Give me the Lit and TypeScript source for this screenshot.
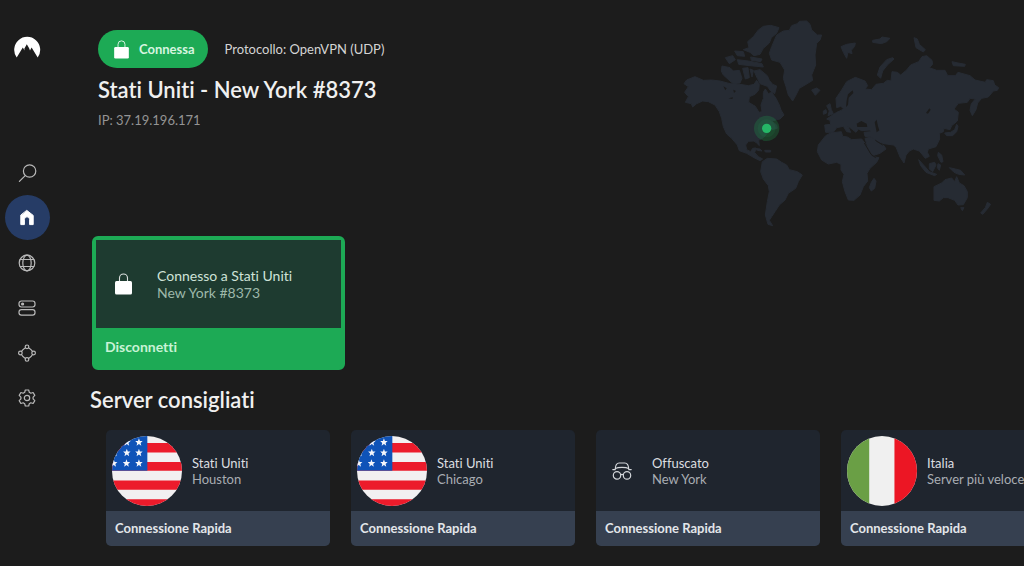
import { LitElement, html, svg, css } from "lit";
import { customElement, property } from "lit/decorators.js";

const star = "0,-12 3,-4 11,-4 5,2 7,10 0,5 -7,10 -5,2 -11,-4 -3,-4";
const starSpots = [
  [97, 66], [133, 66], [60, 97], [97, 97], [133, 97], [58, 128], [96, 128], [133, 128],
];

const flagUsa = html`<svg class="flag" viewBox="53 47 208 208" aria-hidden="true">
  <defs><clipPath id="round"><circle cx="157" cy="151" r="104" /></clipPath></defs>
  <g clip-path="url(#round)">
    <rect x="53" y="47" width="208" height="208" fill="#f2f0f1" />
    <path fill="#ec1b2b" d="M53 68h208v28H53zM53 124h208v26H53zM53 179h208v28H53zM53 235h208v28H53z" />
    <rect x="53" y="47" width="105" height="103" fill="#0f53b8" />
    ${starSpots.map(([x, y]) => svg`<polygon fill="#f4f6fb" points=${star} transform=${`translate(${x} ${y})`} />`)}
  </g>
</svg>`;

const flagItaly = html`<svg class="flag" viewBox="53 47 208 208" aria-hidden="true">
  <defs><clipPath id="round"><circle cx="157" cy="151" r="104" /></clipPath></defs>
  <g clip-path="url(#round)">
    <rect x="53" y="47" width="208" height="208" fill="#f0f0f0" />
    <rect x="53" y="47" width="66" height="208" fill="#6a9f45" />
    <rect x="194" y="47" width="68" height="208" fill="#ec1624" />
  </g>
</svg>`;

const spy = html`<svg class="glyph" viewBox="0 0 20 20" aria-hidden="true" fill="none" stroke="#d3d6da" stroke-width="1.2" stroke-linecap="round" stroke-linejoin="round">
  <path d="M.8 8.6h2.4M16.8 8.6h2.4M3.2 8.4C3.4 4 5 2 7.2 2h5.6c2.200 0 3.800 2 4 6.400M3.400 7.600C5 6.600 7.500 6.400 10 6.400s5 .2 6.600 1.200" />
  <circle cx="5" cy="14.400" r="3.700" /><circle cx="15" cy="14.400" r="3.700" />
  <path d="M8.600 13.800c.8-.6 2-.6 2.800 0" />
</svg>`;

const lock = html`<svg class="lock" viewBox="0 0 17 22" aria-hidden="true">
  <path d="M4.500 9V5a4 4 0 0 1 8 0v4" fill="none" stroke="currentColor" stroke-width="1.100" opacity=".85" />
  <rect x="0" y="8" width="17" height="13.500" rx="1.500" fill="currentColor" />
</svg>`;

const land = [
  "M20 195L45 185L70 196L95 195L120 198L150 206L180 208L205 212L222 208L230 196L238 208L236 225L225 238L208 245L206 262L226 274L237 292L246 290L243 270L250 250L250 232L256 222L265 236L275 232L288 250L298 270L303 285L312 300L300 312L275 318L290 330L292 340L270 345L262 355L250 368L236 376L238 392L230 384L222 378L205 379L197 390L200 404L212 410L218 400L228 399L224 413L235 425L248 432L240 437L222 428L200 415L178 407L172 390L155 370L140 357L130 335L125 310L118 290L105 270L85 260L68 258L50 266L38 276L34 266L16 262L25 245L14 232L25 215L12 206Z",
  "M275 95L290 60L310 48L328 46L335 32L352 26L358 19L380 18L390 28L395 45L412 60L425 60L420 75L410 85L405 120L407 150L395 180L398 196L375 210L358 220L348 240L338 258L325 240L318 215L310 190L314 165L300 142L275 135L268 115Z",
  "M203 80L220 65L235 45L250 34L272 31L297 38L290 55L274 68L268 84L250 100L240 118L222 122L210 112L190 104L207 98Z",
  "M222 168L240 164L262 182L268 196L278 208L290 213L284 236L272 228L262 214L240 206L232 190Z",
  "M126 153L150 158L160 168L178 166L186 190L180 204L160 206L150 198L130 180L124 168Z",
  "M136 128L158 122L166 134L148 146ZM164 108L190 110L194 124L172 122ZM172 134L205 138L246 146L250 156L210 152L176 148ZM188 160L204 158L208 188L196 192ZM210 162L220 166L216 186ZM212 126L246 132L242 140L214 136Z",
  "M206 228l18-6l8 8l-14 8z",
  "M222 400L240 402L246 408L232 406ZM254 406h18v5h-16z",
  "M247 440L262 430L290 432L305 442L320 450L328 464L352 470L367 480L355 500L347 520L325 535L315 555L298 570L285 590L275 605L268 616L278 632L264 628L256 600L262 560L268 530L265 512L250 492L242 470Z",
  "M437 362L452 354L484 350L488 364L502 366L515 374L545 372L555 385L565 405L578 425L597 428L590 442L570 460L561 475L563 498L550 515L540 540L522 556L505 555L495 530L487 500L492 478L483 465L483 448L470 442L445 447L425 435L412 410L415 390Z",
  "M555 370L575 366L590 380L612 392L618 402L600 415L578 422L565 402Z",
  "M434 330L452 328L450 316L440 312L470 292L484 286L490 280L482 274L470 278L468 250L485 225L500 200L526 187L555 198L563 212L555 222L575 224L588 208L610 205L622 196L633 198L636 170L652 172L662 180L680 165L692 150L716 140L726 125L740 122L756 136L758 148L748 158L770 166L795 166L803 182L826 182L834 172L870 182L885 195L916 202L920 194L940 197L944 210L956 218L952 226L940 228L925 246L905 250L893 264L888 284L877 302L870 286L874 266L886 252L870 250L862 262L835 265L822 282L835 292L832 318L815 332L810 344L792 340L790 350L778 355L779 372L768 395L745 402L742 412L748 424L736 430L718 408L700 402L688 408L678 420L672 444L660 426L648 396L640 390L612 386L590 378L575 366L555 364L552 352L572 350L570 345L545 347L535 342L528 352L518 344L503 332L512 352L500 350L490 334L470 338L460 352L437 352Z",
  "M440 272L450 266L454 284L460 296L444 302L448 288ZM430 288l8-4l2 10l-10 4zM395 225L410 219L420 226L406 241Z",
  "M483 95L500 88L526 84L524 94L514 106L516 116L504 112L500 130L490 112ZM578 76L600 72L606 66L630 70L620 80L604 86L578 82Z",
  "M702 68L712 72L718 88L736 104L730 111L708 98ZM638 128L642 132L622 150L608 168L602 190L592 180L600 156L620 134ZM816 140l18 4l22 4l-2 6l-34-2z",
  "M830 328L834 334L830 350L818 362L800 362L794 354L812 352L824 344ZM775 412l10 8l4 20l-6 2l-10-20z",
  "M716 434L736 456L748 470L770 478L764 482L738 472L722 452ZM748 446L764 442L768 450L758 470L748 462ZM774 446l8 4l-4 16l-6-8zM808 458L826 462L842 466L854 480L836 478L822 472Z",
  "M762 515L785 504L795 494L815 489L824 500L830 485L838 504L852 512L862 530L862 548L850 569L834 570L824 556L804 548L790 548L778 558L762 556ZM842 578l10 0l-5 9z",
  "M922 562l10 6l-10 14l-14 16l-6-4l14-16zM574 502L582 490L588 498L584 520L574 528L568 518Z",
].join("");

const water = "M498 276l6-6l2-22l14-14l-2-8l-14 12l-4 18zM530 326l14-8l16 8l2 10l-30 0zM584 322l6-8l4 20l4 12l-8 6zM738 294l10-14l4 4l-8 12zM130 214l10 6l-4 6zM145 250l14-3l-2 5zM160 224l8 4l-6 6z";

const worldMap = html`<svg class="map" viewBox="0 0 990 645" role="img" aria-label="Mappa del mondo">
  <path d=${land} fill="#262b33" stroke="#262b33" stroke-width="3" stroke-linejoin="round" />
  <path d=${water} fill="#1c1c1c" />
  <path d="M553 384l20 34l14 10M586 376l22 14" fill="none" stroke="#1c1c1c" stroke-width="3" />
  <circle cx="260" cy="340" r="38" fill="#1daa55" opacity=".24" />
  <circle cx="260" cy="340" r="27" fill="#1daa55" opacity=".1" />
  <circle cx="260" cy="340" r="14" fill="#25b666" />
</svg>`;

const navIcons = [
  { label: "Cerca", art: svg`<circle cx="11.600" cy="7" r="6.200" /><path d="M7.200 11.600L1.400 17.400" />` },
  { label: "Home", art: svg`<path d="M9 1.600L15.200 6.400V15.600H11.600V10.400a2.600 2.600 0 0 0-5.200 0V15.600H2.800V6.400Z" fill="#fff" stroke="#fff" stroke-width="1" stroke-linejoin="round" />` },
  { label: "Paesi", art: svg`<circle cx="9" cy="9" r="7.800" /><ellipse cx="9" cy="9" rx="4.200" ry="7.800" /><path d="M2.200 5.500h13.600M2.200 12.500h13.600" />` },
  { label: "Server", art: svg`<rect x="1" y="2" width="16" height="6" rx="2.400" /><rect x="1" y="10.600" width="16" height="5.600" rx="2.400" /><circle cx="4.600" cy="5" r="1" fill="currentColor" />` },
  { label: "Meshnet", art: svg`<circle cx="9" cy="2.800" r="1.800" /><circle cx="9" cy="15.400" r="1.800" /><circle cx="2.400" cy="9" r="1.800" /><circle cx="15.600" cy="9" r="1.800" /><path d="M7.400 3.700C5.600 4.800 4.400 5.800 3.400 7.500M10.600 3.700c1.800 1.100 3 2.100 4 3.800M3.400 10.500c1 1.800 2.200 3 4 4M14.600 10.500c-1 1.800-2.200 3-4 4" />` },
  { label: "Impostazioni", art: svg`<circle cx="9" cy="9" r="2.700" /><path d="M7.300 1h3.400l.6 2.300 1.500.9 2.300-.7 1.700 2.900-1.700 1.700v1.800l1.700 1.700-1.700 2.900-2.300-.7-1.500.9-.6 2.300H7.300l-.6-2.300-1.500-.9-2.300.7-1.700-2.900 1.700-1.700V8.100L1.200 6.400l1.700-2.900 2.300.7 1.500-.9z" stroke-linejoin="round" />` },
];

@customElement("side-nav")
class SideNav extends LitElement {
  static styles = css`
    :host { display: block; }
    .rail { display: flex; flex-direction: column; align-items: center; padding: 36px 0 0 4px; }
    .logo { width: 28px; height: 22px; margin-bottom: 92px; }
    .list { list-style: none; margin: 0; padding: 0; }
    .item { display: flex; width: 45px; height: 45px; align-items: center; justify-content: center; border-radius: 50%; color: #b9b9b9; }
    .current { background: #263c66; }
    .icon { width: 18px; height: 18px; overflow: visible; }
  `;
  render() {
    return html`<nav class="rail" aria-label="Menu">
      <svg class="logo" viewBox="0 0 28 22" aria-hidden="true">
        <path fill="#fff" d="M3.700 21.500A13 13 0 1 1 24.700 21.500L18.600 11.600L17 14.500L16 12L13.800 8.200L11.300 12.800L11.600 14.600L9.800 11.600Z" />
      </svg>
      <ul class="list">
        ${navIcons.map((n, i) => html`<li>
          <a class=${i === 1 ? "item current" : "item"} href="#" aria-label=${n.label}>
            <svg class="icon" viewBox="0 0 18 18" fill="none" stroke="currentColor" stroke-width="1.200" stroke-linecap="round">${n.art}</svg>
          </a>
        </li>`)}
      </ul>
    </nav>`;
  }
}

@customElement("server-card")
class ServerCard extends LitElement {
  @property() name = "";
  @property() place = "";
  @property() kind = "";
  static styles = css`
    :host { display: block; flex: none; }
    .card { display: block; width: 224px; padding: 0; border: 0; border-radius: 5px; overflow: hidden; background: #1f252e; font: 13px/16px Lato, sans-serif; font-variant-ligatures: none; text-align: left; }
    .top { display: flex; align-items: center; gap: 10px; height: 81px; padding-left: 6px; }
    .plain { gap: 20px; padding-left: 16px; }
    .flag { width: 70px; height: 70px; flex: none; }
    .glyph { width: 20px; height: 20px; flex: none; }
    .text { display: flex; flex-direction: column; white-space: nowrap; }
    .name { color: #dcdee0; }
    .place { color: #a9adb3; }
    .action { display: block; padding: 9px 9px 10px; background: #364050; color: #e3e6ea; font-weight: 700; }
  `;
  render() {
    const art = this.kind === "us" ? flagUsa : this.kind === "it" ? flagItaly : spy;
    return html`<button class="card" type="button">
      <span class=${this.kind === "spy" ? "top plain" : "top"}>
        ${art}
        <span class="text"><span class="name">${this.name}</span><span class="place">${this.place}</span></span>
      </span>
      <span class="action">Connessione Rapida</span>
    </button>`;
  }
}

const servers = [
  { name: "Stati Uniti", place: "Houston", kind: "us" },
  { name: "Stati Uniti", place: "Chicago", kind: "us" },
  { name: "Offuscato", place: "New York", kind: "spy" },
  { name: "Italia", place: "Server più veloce", kind: "it" },
];

@customElement("app-root")
class AppRoot extends LitElement {
  static styles = css`
    :host { display: grid; grid-template-columns: 50px minmax(0, 1fr); min-height: 100vh; background: #1c1c1c; color: #f0f0f0; font: 13px/16px Lato, sans-serif; font-variant-ligatures: none; }
    .main { min-width: 0; overflow: hidden; padding-left: 40px; }
    .hero { display: flex; justify-content: space-between; padding: 15px 14px 6px 8px; }
    .info { padding-top: 15px; }
    .status { display: flex; align-items: center; gap: 17px; color: #d4d4d4; }
    .pill { display: flex; align-items: center; gap: 10px; height: 38px; padding: 0 13px 0 16px; border-radius: 19px; background: #1daa55; color: #d8f5e0; font-weight: 700; }
    .lock { width: 17px; height: 22px; flex: none; color: #fff; }
    .pill .lock { width: 15px; height: 19px; }
    .title { margin: 8px 0 0; font-size: 22px; line-height: 28px; font-weight: 600; }
    .ip { margin: 8px 0 0; color: #949494; }
    .map { width: 330px; height: 215px; flex: none; }
    .active { display: block; width: 253px; margin-left: 2px; padding: 0; border: 4px solid #1daa55; border-radius: 6px; background: #1daa55; font: 14px/17px Lato, sans-serif; font-variant-ligatures: none; text-align: left; }
    .server { display: flex; align-items: center; gap: 25px; height: 88px; padding-left: 19px; background: #1e3b30; }
    .lines { display: flex; flex-direction: column; }
    .name { color: #cfe3d8; }
    .place { color: #9db8aa; }
    .stop { display: block; padding: 10px 9px 11px; color: #c9f3d6; font-weight: 700; }
    .heading { margin: 16px 0; font-size: 22px; line-height: 28px; font-weight: 600; }
    .cards { display: flex; gap: 21px; padding-left: 16px; }
  `;
  render() {
    return html`<side-nav></side-nav>
      <main class="main">
        <header class="hero">
          <div class="info">
            <div class="status"><span class="pill">${lock}Connessa</span><span>Protocollo: OpenVPN (UDP)</span></div>
            <h1 class="title">Stati Uniti - New York #8373</h1>
            <p class="ip">IP: 37.19.196.171</p>
          </div>
          ${worldMap}
        </header>
        <button class="active" type="button">
          <span class="server">${lock}<span class="lines"><span class="name">Connesso a Stati Uniti</span><span class="place">New York #8373</span></span></span>
          <span class="stop">Disconnetti</span>
        </button>
        <section>
          <h2 class="heading">Server consigliati</h2>
          <div class="cards">
            ${servers.map((s) => html`<server-card .name=${s.name} .place=${s.place} .kind=${s.kind}></server-card>`)}
          </div>
        </section>
      </main>`;
  }
}
